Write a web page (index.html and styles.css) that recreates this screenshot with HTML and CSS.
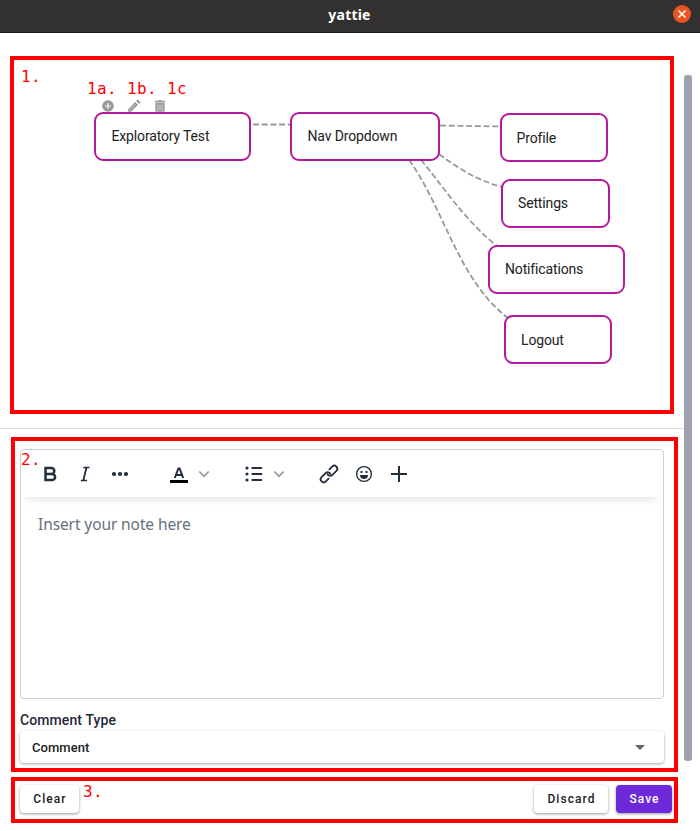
FILE: index.html
```html
<!DOCTYPE html>
<html lang="en">
<head>
<meta charset="utf-8">
<title>yattie</title>
<link rel="stylesheet" href="styles.css">
</head>
<body>
<header class="titlebar">
  <span class="title">yattie</span>
  <button class="close" aria-label="Close"><svg width="18" height="18" viewBox="0 0 18 18"><path d="M5.500 5.500l7 7M12.500 5.500l-7 7" stroke="#fff" stroke-width="1.500"/></svg></button>
</header>
<main class="main">
  <section class="map">
    <svg class="edges" width="656" height="350" viewBox="14 60 656 350">
      <path d="M253 124.500H291M440 125.500L500 126.500M439 154C458 168 476 180 502 187M421 160C440 182 464 220 497 246M409 160C444 208 458 280 508 318"/>
    </svg>
    <div class="node exploratory">Exploratory Test</div>
    <div class="node dropdown">Nav Dropdown</div>
    <div class="node profile">Profile</div>
    <div class="node settings">Settings</div>
    <div class="node notifications">Notifications</div>
    <div class="node logout">Logout</div>
    <div class="tools">
      <svg width="14" height="14" viewBox="0 0 24 24"><path d="M17 13h-4v4h-2v-4H7v-2h4V7h2v4h4m-5-9A10 10 0 0 0 2 12a10 10 0 0 0 10 10 10 10 0 0 0 10-10A10 10 0 0 0 12 2"/></svg>
      <svg width="14" height="14" viewBox="0 0 24 24"><path d="M2 17l12-12 5 5L7 22H2zM15.500 3.500l2-2q1-1 2 0l3 3q1 1 0 2l-2 2z"/><path d="M5 18L15 8" stroke="#fff" stroke-width="1"/></svg>
      <svg width="14" height="14" viewBox="0 0 24 24"><path d="M4 3h5l1-1.500h4L15 3h6v3H3V3zM4 7h16v13q0 2-2 2H6q-2 0-2-2z"/><path d="M8 9.500v10M12 9.500v10M16 9.500v10" stroke="#fff" stroke-width="1"/></svg>
    </div>
    <span class="mark mark-1">1.</span>
    <span class="mark mark-1abc">1a. 1b. 1c</span>
  </section>
  <section class="note">
    <span class="mark mark-2">2.</span>
    <div class="editor">
      <div class="toolbar">
        <svg width="35" height="24" viewBox="0 0 35 24"><path d="M13 6.100h5.900a2.900 2.900 0 0 1 0 5.800H13zm0 5.800h6.500a3.100 3.100 0 0 1 0 6.200H13z" fill="none" stroke="#222f3e" stroke-width="2.500"/></svg>
        <svg width="35" height="24" viewBox="0 0 35 24"><path d="M15.800 5.500h6.200M13.300 18.500h6.200M19.200 5.500l-3.200 13" fill="none" stroke="#222f3e" stroke-width="1.300"/><path d="M18.800 5.500l-3.100 13" stroke="#222f3e" stroke-width="1.400"/></svg>
        <svg width="35" height="24" viewBox="0 0 35 24"><g fill="#222f3e"><circle cx="11.500" cy="12" r="2.100"/><circle cx="17.500" cy="12" r="2.100"/><circle cx="23.500" cy="12" r="2.100"/></g></svg>
        <svg class="group" width="60" height="24" viewBox="0 0 60 24"><path d="M13.300 16L16.900 6.500h1.200L21.700 16M14.800 13h5.400" fill="none" stroke="#222f3e" stroke-width="2"/><path d="M8.500 18h18v3h-18z"/><path d="M37.800 9.500l4.700 4.800 4.700-4.800" fill="none" stroke="#9198a0" stroke-width="1.700"/></svg>
        <svg class="group" width="60" height="24" viewBox="0 0 60 24"><path d="M15.800 6h9M15.800 12h9M15.800 18h9" stroke="#222f3e" stroke-width="2" stroke-linecap="round"/><g fill="#222f3e"><circle cx="10.500" cy="6" r="1.600"/><circle cx="10.500" cy="12" r="1.600"/><circle cx="10.500" cy="18" r="1.600"/></g><path d="M37.800 9.500l4.700 4.800 4.700-4.800" fill="none" stroke="#9198a0" stroke-width="1.700"/></svg>
        <svg class="group" width="35" height="24" viewBox="0 0 35 24"><g transform="translate(17.500 12) rotate(-45)" fill="none" stroke="#222f3e" stroke-width="1.800" stroke-linecap="round"><path d="M-3.500 3h-4a3 3 0 0 1 0-6H-1.500a3 3 0 0 1 2.600 4"/><path d="M3.500-3h4a3 3 0 0 1 0 6H1.500a3 3 0 0 1-2.600-4"/></g></svg>
        <svg width="35" height="24" viewBox="0 0 35 24"><circle cx="17.500" cy="12" r="7.400" fill="none" stroke="#222f3e" stroke-width="1.400"/><path d="M13.500 13h8a4 4 0 0 1-8 0M14 9h2v2h-2zM19 9h2v2h-2z" fill="#222f3e"/></svg>
        <svg width="35" height="24" viewBox="0 0 35 24"><path d="M9.500 12h16M17.500 4v16" stroke="#222f3e" stroke-width="2"/></svg>
      </div>
      <div class="placeholder">Insert your note here</div>
    </div>
    <div class="label">Comment Type</div>
    <div class="select"><span>Comment</span><i class="caret"></i></div>
  </section>
  <footer class="actions">
    <button class="btn clear">Clear</button>
    <span class="mark mark-3">3.</span>
    <button class="btn discard">Discard</button>
    <button class="btn save">Save</button>
  </footer>
  <div class="scrollbar"></div>
</main>
</body>
</html>
```
FILE: styles.css
```css
* { box-sizing: border-box; }
body { margin: 0; width: 700px; height: 831px; overflow: hidden; background: #fff; font-family: Roboto, sans-serif; color: #212121; }
svg { display: block; flex: none; }
button { border: 0; padding: 0; font-family: inherit; }
.titlebar { position: relative; height: 33px; background: #333031; border-bottom: 1px solid #1c1a1b; display: flex; align-items: center; justify-content: center; }
.title { color: #fff; font: bold 14px/20px "Noto Sans", sans-serif; padding-bottom: 3px; margin-right: 1px; letter-spacing: .2px; }
.close { position: absolute; right: 9px; top: 5px; width: 18px; height: 18px; border-radius: 50%; background: #e95420; }
.main { position: relative; height: 798px; padding-top: 23px; }
.map { position: relative; width: 664px; height: 358px; margin-left: 10px; border: 4px solid #f00; }
.edges { fill: none; stroke: #999; stroke-width: 1.8; stroke-dasharray: 6 2.7; }
.node { position: absolute; height: 49px; border: 2px solid #b5179e; border-radius: 9px; background: #fff; padding-left: 15.5px; font-size: 14px; line-height: 45px; letter-spacing: -.15px; }
.exploratory { left: 80px; top: 52px; width: 157px; }
.dropdown { left: 276px; top: 52px; width: 150px; }
.profile { left: 485.500px; top: 53.400px; width: 108.500px; line-height: 47px; padding-left: 15px; }
.settings { left: 487px; top: 119px; width: 109.400px; padding-left: 15px; }
.notifications { left: 474px; top: 185px; width: 137px; padding-left: 15px; }
.logout { left: 490px; top: 255.400px; width: 108.400px; line-height: 47px; padding-left: 15px; }
.tools { position: absolute; left: 86.500px; top: 38.500px; display: flex; gap: 12.200px; fill: #999; }
.mark { position: absolute; color: #f00; font: 16px/20px "DejaVu Sans Mono", monospace; white-space: pre; letter-spacing: .37px; }
.mark-1 { left: 7px; top: 7px; }
.mark-1abc { left: 73px; top: 19px; }
.mark-2 { left: 6px; top: 9px; }
.mark-3 { left: 68px; top: 1px; }
.note { position: relative; width: 667px; height: 335px; margin: 23px 0 0 11px; padding: 8px 10px 0 5px; border: 4px solid #f00; }
.note::before { content: ""; position: absolute; left: -15px; top: -13px; width: 684px; height: 1px; background: #ddd; }
.editor { height: 250px; border: 1px solid #ccd0d4; border-radius: 4px; }
.toolbar { height: 47px; padding: 1px 0 0 11px; display: flex; align-items: center; box-shadow: 0 8px 8px -6px rgba(0,0,0,.12); }
.toolbar svg { transform: translateX(.5px); }
.group { margin-left: 24px; }
.group + .group { margin-left: 15px; }
.placeholder { padding: 16px 17px; color: #68727c; font: 15.500px/22px "Noto Sans", sans-serif; letter-spacing: -.1px; }
.label { margin-top: 12px; height: 20px; font-size: 14px; font-weight: 500; line-height: 18px; letter-spacing: .1px; color: #1f2937; }
.select { height: 32px; display: flex; align-items: center; justify-content: space-between; padding: 0 19px 0 12px; border-radius: 4px; box-shadow: 0 1px 3px rgba(0,0,0,.35); font-size: 13px; font-weight: 500; letter-spacing: .05px; }
.caret { border: 5px solid transparent; border-top-color: #666; border-bottom: 0; }
.actions { position: relative; width: 667px; height: 46px; margin: 5px 0 0 11px; padding: 4px 2px 0 5px; border: 4px solid #f00; display: flex; }
.btn { height: 28px; border-radius: 4px; background: #fff; color: #212121; font-size: 12px; font-weight: 500; letter-spacing: 1.07px; padding-left: 1px; box-shadow: 0 1px 3px rgba(0,0,0,.4); }
.clear { width: 59px; margin-right: auto; }
.discard { width: 74px; margin-right: 8px; }
.save { width: 56px; background: #6d28d9; color: #fff; }
.scrollbar { position: absolute; left: 684px; top: 42px; width: 8px; height: 686px; border-radius: 3px; background: #9ca3af; }
```
